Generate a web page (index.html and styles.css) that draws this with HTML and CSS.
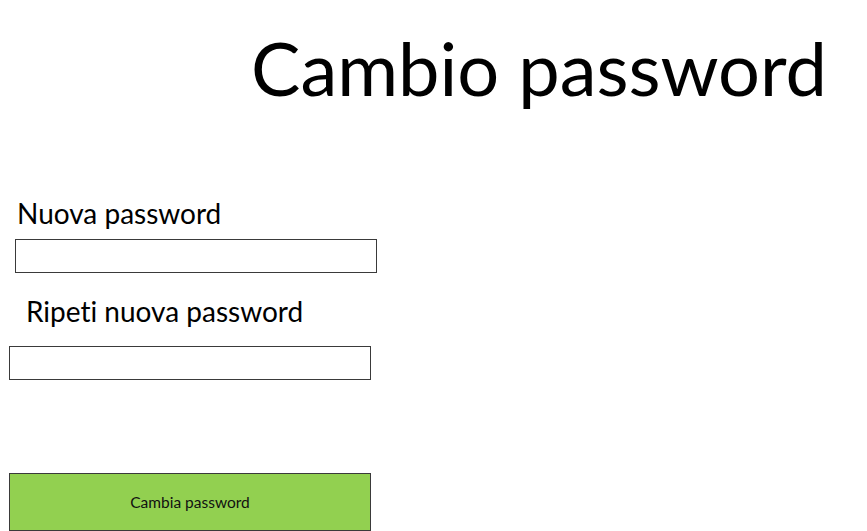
FILE: index.html
```html
<!DOCTYPE html>
<html lang="it">
<head>
<meta charset="utf-8">
<title>Cambio password</title>
<link rel="stylesheet" href="styles.css">
</head>
<body>
<main class="page">
  <h1 class="title">Cambio password</h1>
  <form class="form">
    <label class="label label-new" for="pw1">Nuova password</label>
    <input class="field field-new" id="pw1" type="password">
    <label class="label label-repeat" for="pw2">Ripeti nuova password</label>
    <input class="field field-repeat" id="pw2" type="password">
    <button class="submit" type="button">Cambia password</button>
  </form>
</main>
</body>
</html>
```

FILE: styles.css
```css
html, body {
  margin: 0;
  padding: 0;
  background: #ffffff;
}

.page {
  width: 867px;
  height: 531px;
  overflow: hidden;
  display: flex;
  flex-direction: column;
  font-family: Lato, "Open Sans", sans-serif;
  font-variant-ligatures: none;
  color: #000;
}

.title {
  margin: 0;
  padding: 31px 0 0 251px;
  font-size: 74px;
  font-weight: 400;
  line-height: 1;
}

.form {
  display: flex;
  flex-direction: column;
  align-items: flex-start;
  padding-top: 94px;
}

.label {
  font-size: 28px;
  line-height: 1;
}

.label-new {
  margin-left: 17px;
}

.label-repeat {
  margin-left: 26px;
  margin-top: 24px;
}

.field {
  box-sizing: border-box;
  width: 362px;
  height: 34px;
  border: 1px solid #3a3a3a;
  background: #fff;
  padding: 0;
  margin: 0;
  outline: none;
}

.field-new {
  margin-left: 15px;
  margin-top: 12px;
}

.field-repeat {
  margin-left: 9px;
  margin-top: 21px;
}

.submit {
  box-sizing: border-box;
  width: 362px;
  height: 58px;
  margin: 93px 0 0 9px;
  background: #92d050;
  border: 1px solid #3a3a3a;
  border-radius: 0;
  font-family: Lato, "Open Sans", sans-serif;
  font-variant-ligatures: none;
  font-size: 15.5px;
  color: #111;
  padding: 0;
}
```
